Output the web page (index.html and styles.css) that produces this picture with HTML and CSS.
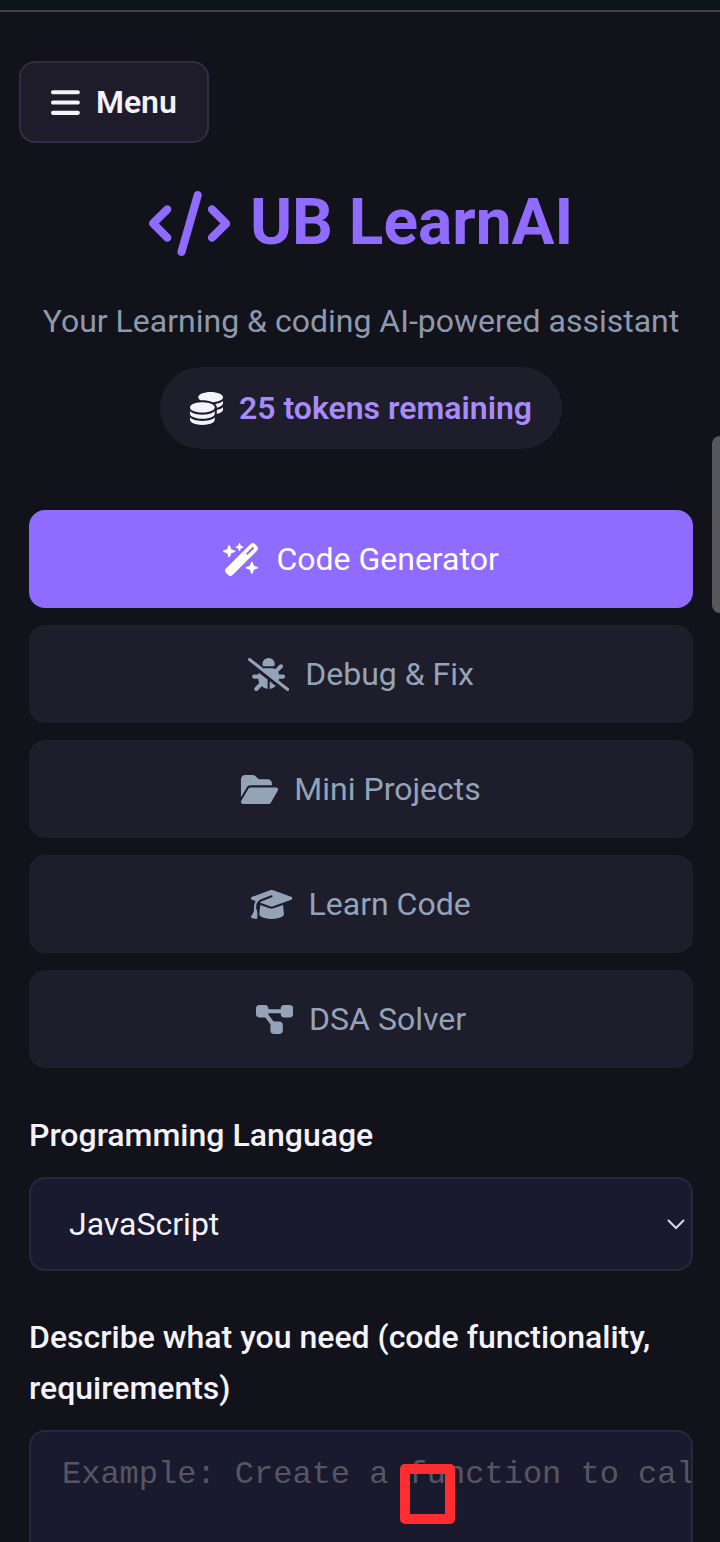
FILE: index.html
```html
<!DOCTYPE html>
<html lang="en">
<head>
  <meta charset="UTF-8">
  <title>UB LearnAI</title>
  <meta name="viewport" content="width=device-width, initial-scale=1.0">
  <link rel="stylesheet" href="styles.css">
</head>
<body>

  <div class="top-strip"></div>

  <div class="menu-bar">
    <button type="button" class="menu-button">
      <svg class="icon" viewBox="0 0 448 512" aria-hidden="true"><path d="M0 96C0 78.3 14.3 64 32 64H416c17.7 0 32 14.3 32 32s-14.3 32-32 32H32C14.3 128 0 113.7 0 96zM0 256c0-17.7 14.3-32 32-32H416c17.7 0 32 14.3 32 32s-14.3 32-32 32H32c-17.7 0-32-14.3-32-32zM448 416c0 17.7-14.3 32-32 32H32c-17.7 0-32-14.3-32-32s14.3-32 32-32H416c17.7 0 32 14.3 32 32z"/></svg>
      Menu
    </button>
  </div>

  <main class="container">
    <header class="header">
      <h1>
        <svg class="icon" viewBox="0 0 640 512" aria-hidden="true"><path d="M392.8 1.2c-17-4.9-34.7 5-39.6 22l-128 448c-4.9 17 5 34.7 22 39.6s34.7-5 39.6-22l128-448c4.9-17-5-34.7-22-39.6zm80.6 120.1c-12.5 12.5-12.5 32.8 0 45.3L562.7 256l-89.4 89.4c-12.5 12.5-12.5 32.8 0 45.3s32.8 12.5 45.3 0l112-112c12.5-12.5 12.5-32.8 0-45.3l-112-112c-12.5-12.5-32.8-12.5-45.3 0zm-306.7 0c-12.5-12.5-32.8-12.5-45.3 0l-112 112c-12.5 12.5-12.5 32.8 0 45.3l112 112c12.5 12.5 32.8 12.5 45.3 0s12.5-32.8 0-45.3L77.3 256l89.4-89.4c12.5-12.5 12.5-32.8 0-45.3z"/></svg>
        UB LearnAI
      </h1>
      <p class="subtitle">Your Learning &amp; coding AI-powered assistant</p>
      <div class="tokens">
        <svg class="icon" viewBox="0 0 512 512" aria-hidden="true"><path d="M512 80c0 18-14.3 34.6-38.4 48c-29.1 16.1-72.5 27.5-122.3 30.9c-3.7-1.8-7.4-3.5-11.3-5C300.6 137.4 248.2 128 192 128c-8.3 0-16.4 .2-24.5 .6l-1.1-.6C142.3 114.6 128 98 128 80c0-44.2 86-80 192-80S512 35.8 512 80zM160.7 161.1c10.2-.7 20.7-1.1 31.3-1.1c62.2 0 117.4 12.3 152.5 31.4C369.3 204.9 384 221.7 384 240c0 4-.7 7.9-2.1 11.7c-4.6 13.2-17 25.3-35 35.5c-.1 .1-.3 .1-.4 .2c-.3 .2-.6 .3-.9 .5c-35 19.4-90.8 32-153.6 32c-59.6 0-112.9-11.3-148.2-29.1c-1.9-.9-3.7-1.9-5.5-2.9C14.3 274.6 0 258 0 240c0-34.8 53.4-64.5 128-75.4c10.5-1.5 21.4-2.7 32.7-3.5zM416 240c0-21.9-10.6-39.9-24.1-53.4c28.3-4.4 54.2-11.4 76.2-20.5c16.3-6.8 31.5-15.2 43.9-25.5V176c0 19.3-16.5 37.1-43.8 50.9c-14.6 7.4-32.4 13.7-52.4 18.5c.1-1.8 .2-3.5 .2-5.3zm-32 96c0 18-14.3 34.6-38.4 48c-1.8 1-3.6 1.9-5.5 2.9C304.9 404.7 251.6 416 192 416c-62.8 0-118.6-12.6-153.6-32C14.3 370.6 0 354 0 336V300.6c12.5 10.3 27.6 18.7 43.9 25.5C83.4 342.6 135.8 352 192 352s108.6-9.4 148.1-25.9c7.8-3.2 15.3-6.9 22.4-10.9c6.1-3.4 11.8-7.2 17.2-11.2c1.5-1.1 2.9-2.3 4.3-3.4V336zm32 0V278.1c19-4.2 36.5-9.5 52.1-16c16.3-6.8 31.5-15.2 43.9-25.5V272c0 10.5-5 21-14.9 30.9c-16.3 16.3-45 29.7-81.3 38.4c.1-1.7 .2-3.5 .2-5.3zM192 448c56.2 0 108.6-9.4 148.1-25.9c16.3-6.8 31.5-15.2 43.9-25.5V432c0 44.2-86 80-192 80S0 476.2 0 432V396.6c12.5 10.3 27.6 18.7 43.9 25.5C83.4 438.6 135.8 448 192 448z"/></svg>
        <span class="token-count">25 tokens remaining</span>
      </div>
    </header>

    <nav class="tabs">
      <button type="button" class="tab active">
        <svg class="icon" viewBox="0 0 576 512" aria-hidden="true"><path d="M234.7 42.7L197 56.8c-3 1.1-5 4-5 7.2s2 6.1 5 7.2l37.7 14.1L248.8 123c1.1 3 4 5 7.2 5s6.1-2 7.2-5l14.1-37.7L315 71.2c3-1.1 5-4 5-7.2s-2-6.1-5-7.2L277.3 42.7 263.2 5c-1.1-3-4-5-7.2-5s-6.1 2-7.2 5L234.7 42.7zM46.1 395.4c-18.7 18.7-18.7 49.1 0 67.9l34.6 34.6c18.7 18.7 49.1 18.7 67.9 0L529.9 116.5c18.7-18.7 18.7-49.1 0-67.9L495.3 14.1c-18.7-18.7-49.1-18.7-67.9 0L46.1 395.4zM484.6 82.6l-105 105-23.3-23.3 105-105 23.3 23.3zM7.5 117.2C3 118.9 0 123.2 0 128s3 9.1 7.5 10.8L64 160l21.2 56.5c1.7 4.5 6 7.5 10.8 7.5s9.1-3 10.8-7.5L128 160l56.5-21.2c4.5-1.7 7.5-6 7.5-10.8s-3-9.1-7.5-10.8L128 96 106.8 39.5C105.1 35 100.8 32 96 32s-9.1 3-10.8 7.5L64 96 7.5 117.2zm352 256c-4.5 1.7-7.5 6-7.5 10.8s3 9.1 7.5 10.8L416 416l21.2 56.5c1.7 4.5 6 7.5 10.8 7.5s9.1-3 10.8-7.5L480 416l56.5-21.2c4.5-1.7 7.5-6 7.5-10.8s-3-9.1-7.5-10.8L480 352l-21.2-56.5c-1.7-4.5-6-7.5-10.8-7.5s-9.1 3-10.8 7.5L416 352l-56.5 21.2z"/></svg>
        Code Generator
      </button>
      <button type="button" class="tab">
        <svg class="icon" viewBox="0 0 640 512" aria-hidden="true"><path d="M38.8 5.1C28.4-3.1 13.3-1.2 5.1 9.2S-1.2 34.7 9.2 42.9l592 464c10.4 8.2 25.5 6.3 33.7-4.1s6.3-25.5-4.1-33.7L477.4 348.9c1.7-9.4 2.6-19 2.6-28.9h64c17.7 0 32-14.3 32-32s-14.3-32-32-32H479.7c-1.1-14.1-5-27.5-11.1-39.5c.7-.6 1.4-1.2 2.1-1.9l64-64c12.5-12.5 12.5-32.8 0-45.3s-32.8-12.5-45.3 0l-64 64c-.7 .7-1.3 1.4-1.9 2.1C409.2 164.1 393.1 160 376 160H264c-8.3 0-16.3 1-24 2.8L38.8 5.1zM320 0c-53 0-96 43-96 96v3.6c0 15.7 12.7 28.4 28.4 28.4H387.6c15.7 0 28.4-12.7 28.4-28.4V96c0-53-43-96-96-96zM160.3 256H96c-17.7 0-32 14.3-32 32s14.3 32 32 32h64c0 24.6 5.5 47.8 15.4 68.6c-2.2 1.3-4.2 2.9-6 4.8l-64 64c-12.5 12.5-12.5 32.8 0 45.3s32.8 12.5 45.3 0l63.1-63.1c24.5 21.8 55.8 36.2 90.3 39.6V335.5L166.7 227.3c-3.4 9-5.6 18.7-6.4 28.7zM336 479.2c36.6-3.6 69.7-19.6 94.8-43.8L336 360.7V479.2z"/></svg>
        Debug &amp; Fix
      </button>
      <button type="button" class="tab">
        <svg class="icon" viewBox="0 0 576 512" aria-hidden="true"><path d="M88.7 223.8L0 375.8V96C0 60.7 28.7 32 64 32H181.5c17 0 33.3 6.7 45.3 18.7l26.5 26.5c12 12 28.3 18.7 45.3 18.7H416c35.3 0 64 28.7 64 64v32H144c-22.8 0-43.8 12.1-55.3 31.8zm27.6 16.1C122.1 230 132.6 224 144 224H544c11.5 0 22 6.1 27.7 16.1s5.7 22.2-.1 32.1l-112 192C453.9 474 443.4 480 432 480H32c-11.5 0-22-6.1-27.7-16.1s-5.7-22.2 .1-32.1l112-192z"/></svg>
        Mini Projects
      </button>
      <button type="button" class="tab">
        <svg class="icon" viewBox="0 0 640 512" aria-hidden="true"><path d="M320 32c-8.1 0-16.1 1.4-23.7 4.1L15.8 137.4C6.3 140.9 0 149.9 0 160s6.3 19.1 15.8 22.6l57.9 20.9C57.3 229.3 48 259.8 48 291.9v28.1c0 28.4-10.8 57.7-22.3 80.8c-6.5 13-13.9 25.8-22.5 37.6C0 442.7-.9 448.3 .9 453.4s6 8.9 11.2 10.2l64 16c4.2 1.1 8.7 .3 12.4-2s6.3-6.1 7.1-10.4c8.6-42.8 4.3-81.2-2.1-108.7C90.3 344.3 86 329.8 80 316.5V291.9c0-30.2 10.2-58.7 27.9-81.5c12.9-15.5 29.6-28 49.2-35.7l157-61.7c8.2-3.2 17.5 .8 20.7 9s-.8 17.5-9 20.7l-157 61.7c-12.4 4.9-23.3 12.4-32.2 21.6l159.6 57.6c7.6 2.7 15.6 4.1 23.7 4.1s16.1-1.4 23.7-4.1L624.2 182.6c9.5-3.4 15.8-12.5 15.8-22.6s-6.3-19.1-15.8-22.6L343.7 36.1C336.1 33.4 328.1 32 320 32zM128 408c0 35.3 86 72 192 72s192-36.7 192-72L496.7 262.6 354.5 314c-11.1 4-22.8 6-34.5 6s-23.5-2-34.5-6L143.3 262.6 128 408z"/></svg>
        Learn Code
      </button>
      <button type="button" class="tab">
        <svg class="icon" viewBox="0 0 576 512" aria-hidden="true"><path d="M0 80C0 53.5 21.5 32 48 32h96c26.5 0 48 21.5 48 48V96H384V80c0-26.5 21.5-48 48-48h96c26.5 0 48 21.5 48 48v96c0 26.5-21.5 48-48 48H432c-26.5 0-48-21.5-48-48V160H192v16c0 1.7-.1 3.4-.3 5L272 288h96c26.5 0 48 21.5 48 48v96c0 26.5-21.5 48-48 48H272c-26.5 0-48-21.5-48-48V336c0-1.7 .1-3.4 .3-5L144 224H48c-26.5 0-48-21.5-48-48V80z"/></svg>
        DSA Solver
      </button>
    </nav>

    <form class="generator-form">
      <div class="form-group">
        <label for="language">Programming Language</label>
        <div class="field">
          <select id="language">
            <option>JavaScript</option>
          </select>
          <svg class="chevron" viewBox="0 0 20 12" aria-hidden="true"><path d="M2 2l8 8 8-8"/></svg>
        </div>
      </div>
      <div class="form-group">
        <label for="prompt">Describe what you need (code functionality, requirements)</label>
        <div class="field">
          <textarea id="prompt" placeholder="Example: Create a function to calculate"></textarea>
          <span class="marker"></span>
        </div>
      </div>
    </form>
  </main>

  <div class="scroll-thumb"></div>

</body>
</html>
```

FILE: styles.css
```css
* {
  box-sizing: border-box;
}

body {
  position: relative;
  height: 100vh;
  margin: 0;
  overflow: hidden;
  background: #12121a;
  color: #f4f2fc;
  font-family: Roboto, sans-serif;
  font-size: 32px;
  line-height: 51px;
}

button,
select {
  font: inherit;
  color: inherit;
}

button {
  cursor: pointer;
}

.icon {
  height: 33px;
  flex: none;
  fill: currentColor;
}

.top-strip {
  height: 12px;
  background: #0c141c;
  border-bottom: 2px solid #403e49;
}

/* Menu */
.menu-bar {
  display: flex;
  padding: 49px 19px 0;
}

.menu-button {
  display: flex;
  align-items: center;
  gap: 16px;
  height: 82px;
  padding: 0 30px;
  background: #1e1c2b;
  border: 2px solid #342b44;
  border-radius: 16px;
  font-weight: 600;
}

.container {
  padding: 0 27px 0 29px;
}

/* Header */
.header {
  display: flex;
  flex-direction: column;
  align-items: center;
  padding-top: 40px;
  text-align: center;
}

h1 {
  display: flex;
  align-items: center;
  gap: 20px;
  margin: 0 0 33px;
  color: #8f6bff;
  font-size: 64px;
  font-weight: 700;
  line-height: 80px;
}

h1 .icon {
  height: 65px;
}

.subtitle {
  margin: 0 0 20px;
  color: #8e99ae;
  white-space: nowrap;
}

.tokens {
  display: flex;
  align-items: center;
  gap: 16px;
  height: 82px;
  padding: 0 30px;
  background: #1e1d2c;
  border-radius: 41px;
  font-weight: 600;
}

.token-count {
  color: #a78bfa;
}

/* Tabs */
.tabs {
  display: flex;
  flex-direction: column;
  gap: 17px;
  margin-top: 61px;
}

.tab {
  display: flex;
  align-items: center;
  justify-content: center;
  gap: 16px;
  height: 98px;
  padding: 0 32px;
  background: #1e1d2c;
  border: none;
  border-radius: 16px;
  color: #94a3b8;
}

.tab.active {
  background: #8f6bff;
  color: #fff;
}

/* Form */
.generator-form {
  margin-top: 42px;
}

.form-group {
  margin-bottom: 41px;
}

label {
  display: block;
  margin-bottom: 16px;
  font-weight: 500;
}

.field {
  position: relative;
}

select,
textarea {
  display: block;
  width: 100%;
  background: #1a1a2e;
  border: 2px solid #2b273a;
  border-radius: 16px;
  outline: none;
}

select {
  height: 94px;
  padding: 0 38px;
  appearance: none;
}

.chevron {
  position: absolute;
  top: 41px;
  right: 7px;
  width: 20px;
  height: 12px;
  fill: none;
  stroke: #d9d8e4;
  stroke-width: 2;
}

textarea {
  height: 300px;
  padding: 24px 31px;
  overflow: hidden;
  color: inherit;
  font-family: "Liberation Mono", monospace;
  font-size: 32px;
  line-height: 38px;
  white-space: nowrap;
  resize: none;
}

textarea::placeholder {
  color: #565663;
}

.marker {
  position: absolute;
  top: 34px;
  left: 371px;
  width: 55px;
  height: 60px;
  border: 10px solid #ff2d30;
  border-radius: 5px;
}

.scroll-thumb {
  position: absolute;
  top: 436px;
  right: 0;
  width: 8px;
  height: 177px;
  background: #58585c;
  border-radius: 8px 0 0 8px;
}
```
